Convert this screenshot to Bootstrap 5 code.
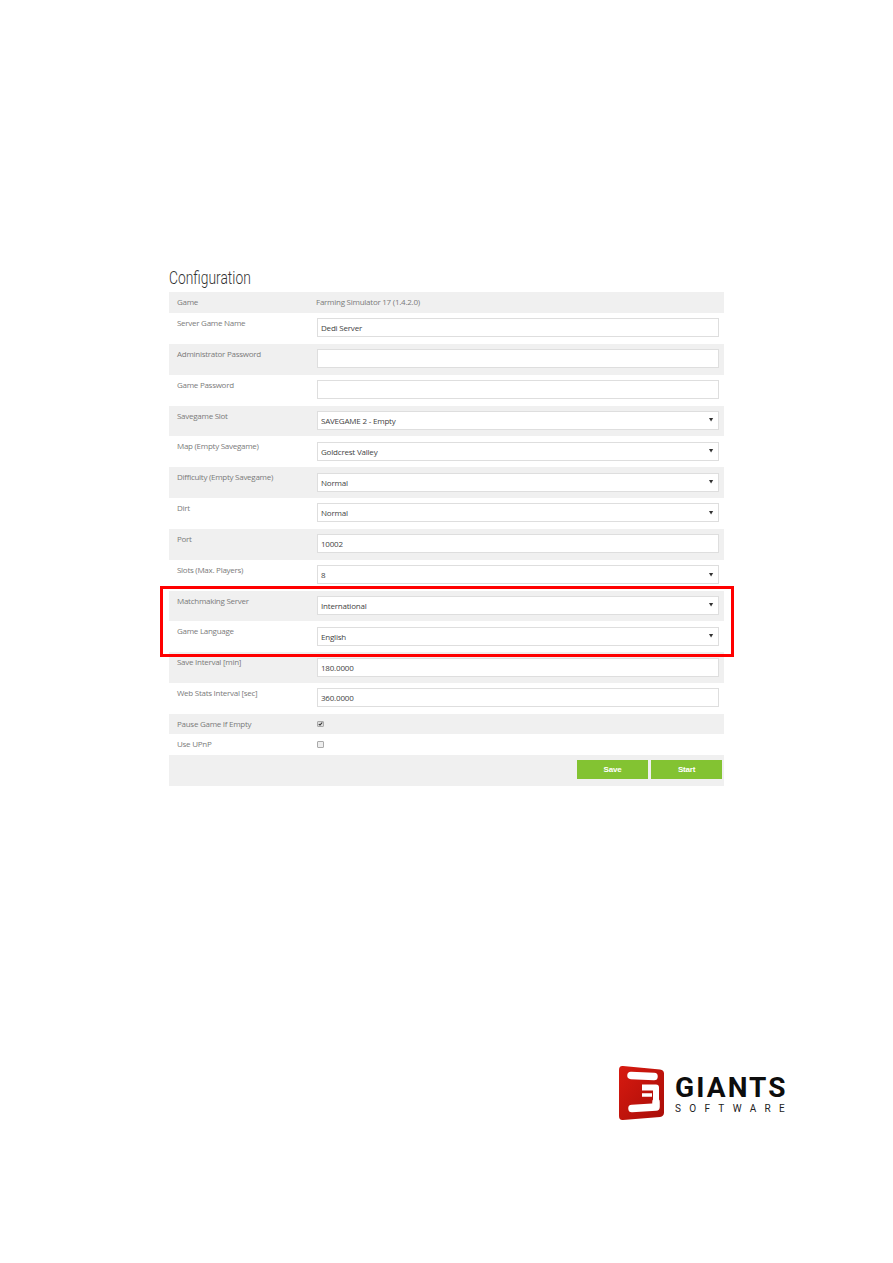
<!DOCTYPE html>
<html lang="en">
<head>
<meta charset="utf-8">
<title>Configuration</title>
<link rel="stylesheet" href="https://cdn.jsdelivr.net/npm/bootstrap@5.3.0/dist/css/bootstrap.min.css">
<style>
html,body{background:#fff;height:1263px;overflow:hidden}
body{font-family:"Open Sans","Noto Sans",sans-serif;font-size:8px;color:#777}
.sheet{padding:268px 0 0 169px;width:893px}
.panel-wrap{width:555px;position:relative}
.cfg-title{font-family:Roboto,"Liberation Sans",sans-serif;font-weight:300;font-size:17.5px;line-height:20px;color:#333;margin:0 0 4px;transform:scaleX(.79);transform-origin:left center}
.cfg-row{display:flex;height:30.85px;background:#fff;padding:0 5px 0 8px}
.cfg-row.alt{background:#f0f0f0}
.cfg-row.short{height:20.5px;align-items:center}
.cfg-row.first{height:21px}
.lbl{width:139px;flex:none;padding-top:4px;line-height:11px;color:#7b7b7b;font-size:8px;letter-spacing:-.27px}
.short .lbl{padding:0 0 2px}
.val{flex:1;min-width:0;padding-top:5.3px}
.short .val{padding:0 0 2px;color:#7b7b7b;letter-spacing:-.25px}
.cfg-input{height:19px;min-height:0;margin-left:1px;width:402px;border:1px solid #dedede;border-radius:0;padding:0 3px;font-size:8px;line-height:17px;color:#444;background-color:#fff;font-family:inherit;letter-spacing:-.2px}
select.cfg-input{background-image:url("data:image/svg+xml,%3Csvg xmlns='http://www.w3.org/2000/svg' width='6' height='4'%3E%3Cpath d='M0 0h5L2.5 3.5z' fill='%23333'/%3E%3C/svg%3E");background-position:right 4px center;background-size:5px 4px;padding:0 12px 0 3px}
.short .chk{width:6.5px;height:6.5px;margin:2px 0 0 1px;border:1px solid #aaa;border-radius:1px;background-color:#eee;display:block}
.short .chk:checked{background-color:#ddd;border-color:#aaa;background-image:url("data:image/svg+xml,%3Csvg xmlns='http://www.w3.org/2000/svg' viewBox='0 0 8 8'%3E%3Cpath d='M1.2 4.2l2 2 3.6-5' fill='none' stroke='%23333' stroke-width='1.8'/%3E%3C/svg%3E");background-size:100%}
.btn-row{height:31px;gap:3px;justify-content:flex-end;align-items:flex-start;padding:5px 2px 0 0}
.go-btn{width:71px;height:19px;padding:0;border:0;border-radius:0;background:#83c332;color:#fff;font-family:"Liberation Sans",sans-serif;font-weight:700;font-size:8px;line-height:19px;letter-spacing:-.2px}
.go-btn:hover{background:#83c332;color:#fff}
.mark-box{position:absolute;left:-9px;top:318px;width:574px;height:71px;border:3px solid #f00;pointer-events:none}
.logo-strip{margin:279px 0 0 450px;gap:10px}
.logo-words{color:#111;font-family:Roboto,"Liberation Sans",sans-serif;font-weight:700;padding-top:5px}
.logo-big{font-size:28px;line-height:22px;letter-spacing:2.1px;white-space:nowrap;color:#0d0d0d}
.logo-small{font-size:10px;line-height:10px;font-weight:400;letter-spacing:8.3px;white-space:nowrap;margin-top:5px;color:#222}
</style>
</head>
<body>
<main class="sheet">
  <div class="panel-wrap">
    <h1 class="cfg-title">Configuration</h1>
    <div class="cfg-row alt short first"><div class="lbl">Game</div><div class="val">Farming Simulator 17 (1.4.2.0)</div></div>
    <div class="cfg-row"><div class="lbl">Server Game Name</div><div class="val"><input class="form-control cfg-input" value="Dedi Server"></div></div>
    <div class="cfg-row alt"><div class="lbl">Administrator Password</div><div class="val"><input class="form-control cfg-input"></div></div>
    <div class="cfg-row"><div class="lbl">Game Password</div><div class="val"><input class="form-control cfg-input"></div></div>
    <div class="cfg-row alt"><div class="lbl">Savegame Slot</div><div class="val"><select class="form-select cfg-input"><option>SAVEGAME 2 - Empty</option></select></div></div>
    <div class="cfg-row"><div class="lbl">Map (Empty Savegame)</div><div class="val"><select class="form-select cfg-input"><option>Goldcrest Valley</option></select></div></div>
    <div class="cfg-row alt"><div class="lbl">Difficulty (Empty Savegame)</div><div class="val"><select class="form-select cfg-input"><option>Normal</option></select></div></div>
    <div class="cfg-row"><div class="lbl">Dirt</div><div class="val"><select class="form-select cfg-input"><option>Normal</option></select></div></div>
    <div class="cfg-row alt"><div class="lbl">Port</div><div class="val"><input class="form-control cfg-input" value="10002"></div></div>
    <div class="cfg-row"><div class="lbl">Slots (Max. Players)</div><div class="val"><select class="form-select cfg-input"><option>8</option></select></div></div>
    <div class="cfg-row alt"><div class="lbl">Matchmaking Server</div><div class="val"><select class="form-select cfg-input"><option>International</option></select></div></div>
    <div class="cfg-row"><div class="lbl">Game Language</div><div class="val"><select class="form-select cfg-input"><option>English</option></select></div></div>
    <div class="cfg-row alt"><div class="lbl">Save Interval [min]</div><div class="val"><input class="form-control cfg-input" value="180.0000"></div></div>
    <div class="cfg-row"><div class="lbl">Web Stats Interval [sec]</div><div class="val"><input class="form-control cfg-input" value="360.0000"></div></div>
    <div class="cfg-row alt short"><div class="lbl">Pause Game If Empty</div><div class="val"><input class="form-check-input chk" type="checkbox" checked aria-label="Pause Game If Empty"></div></div>
    <div class="cfg-row short"><div class="lbl">Use UPnP</div><div class="val"><input class="form-check-input chk" type="checkbox" aria-label="Use UPnP"></div></div>
    <div class="cfg-row alt btn-row"><button class="btn go-btn" type="button">Save</button><button class="btn go-btn" type="button">Start</button></div>
    <div class="mark-box"></div>
  </div>
  <div class="logo-strip d-flex align-items-center">
    <svg width="46" height="56" viewBox="0 0 46 56" aria-hidden="true">
      <defs><linearGradient id="logoRed" x1="0" y1="0" x2="1" y2="1"><stop offset="0" stop-color="#d81a10"/><stop offset="1" stop-color="#a80d08"/></linearGradient></defs>
      <path d="M4 1 41 4.500q4 .4 4 4V47.500q0 4-4 4.400L4 55q-4 .4-4-4V5Q0 .600 4 1z" fill="url(#logoRed)"/>
      <path d="M12 10.500 35 11.500" stroke="#fff" stroke-width="7.500" stroke-linecap="round" fill="none"/>
      <path d="M23 22.500H37V38" stroke="#fff" stroke-width="6" fill="none" stroke-linejoin="round"/>
      <path d="M23 30H33" stroke="#fff" stroke-width="3.500" fill="none"/>
      <path d="M13 43.500 37 42V37" stroke="#fff" stroke-width="7.500" stroke-linecap="round" stroke-linejoin="round" fill="none"/>
    </svg>
    <div class="logo-words"><div class="logo-big">GIANTS</div><div class="logo-small">SOFTWARE</div></div>
  </div>
</main>
<script src="https://cdn.jsdelivr.net/npm/bootstrap@5.3.0/dist/js/bootstrap.bundle.min.js"></script>
</body>
</html>
